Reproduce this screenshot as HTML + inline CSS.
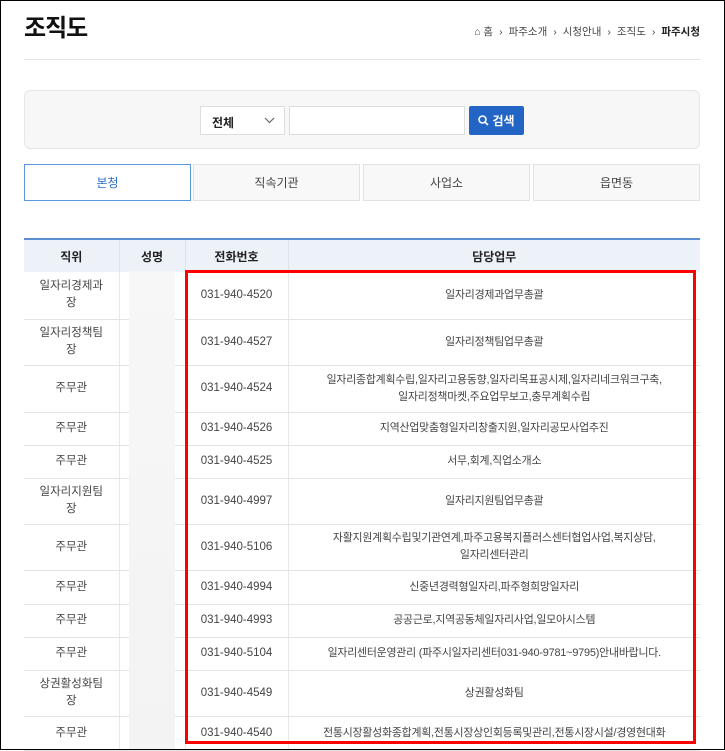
<!DOCTYPE html>
<html><head><meta charset="utf-8"><style>
*{box-sizing:border-box;margin:0;padding:0}
body{width:725px;height:750px;overflow:hidden;background:#fff;font-family:"Liberation Sans","Noto Sans CJK KR",sans-serif;color:#333;position:relative}
.frame{position:absolute;left:0;top:0;width:725px;height:750px;border:1px solid #000;z-index:5;pointer-events:none}
.abs{position:absolute}
h1{position:absolute;left:24px;top:8px;font-size:24px;font-weight:bold;color:#111;letter-spacing:-1px}
.bc{position:absolute;right:25px;top:24px;font-size:10.5px;color:#444;display:flex;align-items:center;gap:6px}
.bc b{font-weight:bold;color:#222}
.hr{left:24px;top:59px;width:676px;height:1px;background:#e3e3e3}
.sbox{left:24px;top:90px;width:676px;height:59px;background:#f7f7f7;border:1px solid #e6e6e6;border-radius:6px}
.sel{left:200px;top:106px;width:85px;height:29px;background:#fff;border:1px solid #ddd;font-size:12px;font-weight:bold;color:#222;padding:7px 0 0 11px}
.inp{left:289px;top:106px;width:176px;height:29px;background:#fff;border:1px solid #ddd}
.btn{left:469px;top:106px;width:55px;height:29px;background:#2265c4;border-radius:2px;color:#fff;font-size:12px;font-weight:bold;display:flex;align-items:center;justify-content:center;gap:3px}
.tab{top:164px;height:37px;border:1px solid #e2e2e2;background:#f8f8f8;font-size:12px;color:#444;display:flex;align-items:center;justify-content:center}
.tab.on{border-color:#5b96e0;background:#fff;color:#2a6dcc}
table{position:absolute;left:24px;top:238px;width:676px;border-collapse:collapse;border-top:2px solid #5b8fd0;font-size:11.5px;color:#444}
th{background:#edf2f9;height:33px;font-weight:bold;color:#222;border-right:1px solid #dde3ea;font-size:12px}
td{text-align:center;border-bottom:1px solid #e3e3e3;border-right:1px solid #e8e8e8;line-height:17px;padding:0 4px}
td:last-child{font-size:10.9px;letter-spacing:-0.2px}
th:last-child,td:last-child{border-right:none}
td.n{background:#fff;position:relative}
.gray{left:129px;top:271px;width:46px;height:479px;background:linear-gradient(#f7f7f7,#f3f3f3)}
.red{left:185px;top:270px;width:511px;height:474px;border:3px solid #f00;z-index:4}
</style></head><body>
<div class="frame"></div>
<h1>조직도</h1>
<div class="bc"><span>⌂ 홈</span><span>›</span><span>파주소개</span><span>›</span><span>시청안내</span><span>›</span><span>조직도</span><span>›</span><b>파주시청</b></div>
<div class="abs hr"></div>
<div class="abs sbox"></div>
<div class="abs sel">전체<svg style="position:absolute;right:9px;top:10px" width="11" height="7" viewBox="0 0 11 7"><path d="M1 1l4.5 4.5L10 1" fill="none" stroke="#666" stroke-width="1.2"/></svg></div>
<div class="abs inp"></div>
<div class="abs btn"><svg width="11" height="11" viewBox="0 0 11 11"><circle cx="4.5" cy="4.5" r="3.5" fill="none" stroke="#fff" stroke-width="1.6"/><path d="M7 7l3 3" stroke="#fff" stroke-width="1.6"/></svg>검색</div>
<div class="abs tab on" style="left:24px;width:167px">본청</div>
<div class="abs tab" style="left:193px;width:167px">직속기관</div>
<div class="abs tab" style="left:363px;width:167px">사업소</div>
<div class="abs tab" style="left:533px;width:167px">읍면동</div>
<table>
<colgroup><col style="width:95px"><col style="width:66px"><col style="width:103px"><col></colgroup>
<tr><th>직위</th><th>성명</th><th>전화번호</th><th>담당업무</th></tr>
<tr style="height:47px"><td>일자리경제과<br>장</td><td class="n"></td><td>031-940-4520</td><td>일자리경제과업무총괄</td></tr>
<tr style="height:46px"><td>일자리정책팀<br>장</td><td class="n"></td><td>031-940-4527</td><td>일자리정책팀업무총괄</td></tr>
<tr style="height:47px"><td>주무관</td><td class="n"></td><td>031-940-4524</td><td>일자리종합계획수립,일자리고용동향,일자리목표공시제,일자리네크워크구축,<br>일자리정책마켓,주요업무보고,충무계획수립</td></tr>
<tr style="height:33px"><td>주무관</td><td class="n"></td><td>031-940-4526</td><td>지역산업맞춤형일자리창출지원,일자리공모사업추진</td></tr>
<tr style="height:33px"><td>주무관</td><td class="n"></td><td>031-940-4525</td><td>서무,회계,직업소개소</td></tr>
<tr style="height:46px"><td>일자리지원팀<br>장</td><td class="n"></td><td>031-940-4997</td><td>일자리지원팀업무총괄</td></tr>
<tr style="height:46px"><td>주무관</td><td class="n"></td><td>031-940-5106</td><td>자활지원계획수립및기관연계,파주고용복지플러스센터협업사업,복지상담,<br>일자리센터관리</td></tr>
<tr style="height:34px"><td>주무관</td><td class="n"></td><td>031-940-4994</td><td>신중년경력형일자리,파주형희망일자리</td></tr>
<tr style="height:33px"><td>주무관</td><td class="n"></td><td>031-940-4993</td><td>공공근로,지역공동체일자리사업,일모아시스템</td></tr>
<tr style="height:33px"><td>주무관</td><td class="n"></td><td>031-940-5104</td><td>일자리센터운영관리 (파주시일자리센터031-940-9781~9795)안내바랍니다.</td></tr>
<tr style="height:46px"><td>상권활성화팀<br>장</td><td class="n"></td><td>031-940-4549</td><td>상권활성화팀</td></tr>
<tr style="height:34px"><td>주무관</td><td class="n"></td><td>031-940-4540</td><td>전통시장활성화종합계획,전통시장상인회등록및관리,전통시장시설/경영현대화</td></tr>
</table>
<div class="abs gray"></div>
<div class="abs red"></div>
</body></html>
